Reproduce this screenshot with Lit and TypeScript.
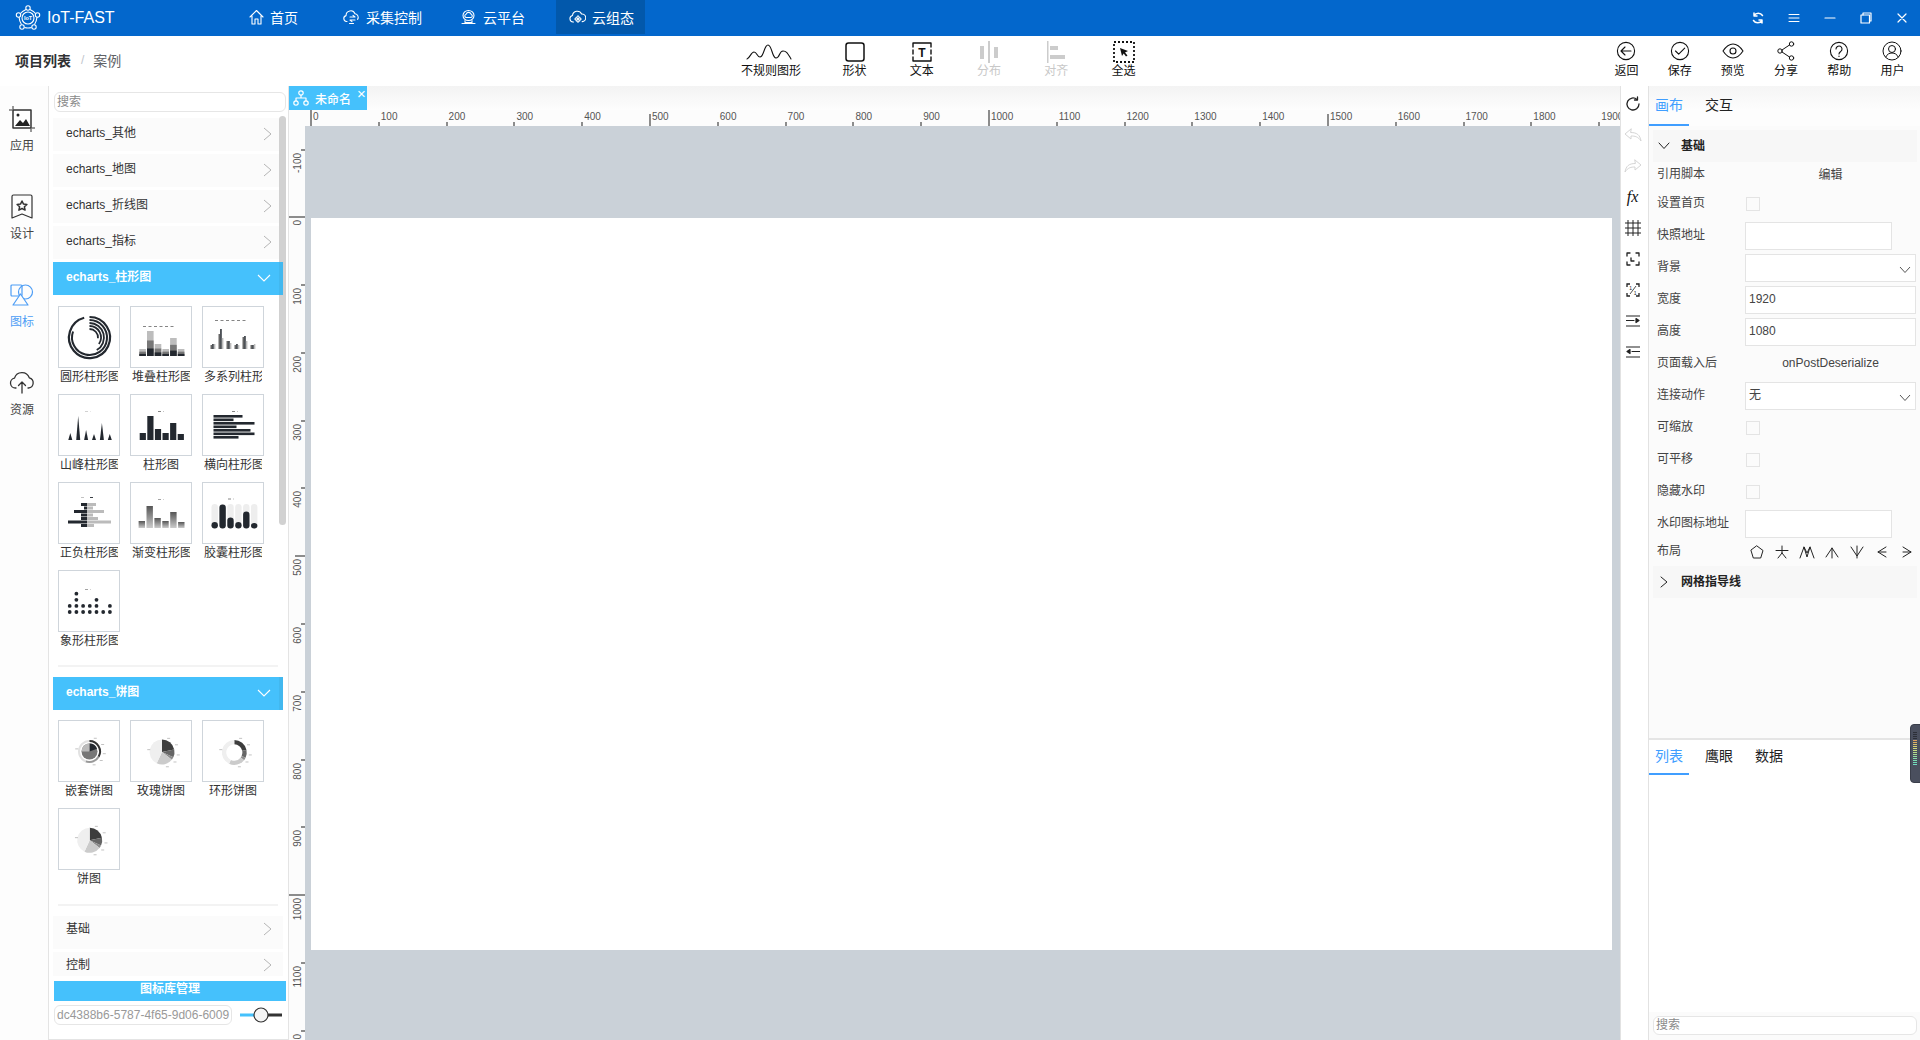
import { LitElement, html, svg, css } from "lit";
import { customElement } from "lit/decorators.js";

const DARK = "#23282f";
const pt = (cx: number, cy: number, r: number, a: number) => {
  const t = ((a - 90) * Math.PI) / 180;
  return [+(cx + r * Math.cos(t)).toFixed(2), +(cy + r * Math.sin(t)).toFixed(2)];
};
const arc = (cx: number, cy: number, r: number, a0: number, a1: number) => {
  const [x0, y0] = pt(cx, cy, r, a0);
  const [x1, y1] = pt(cx, cy, r, a1);
  return `M${x0} ${y0}A${r} ${r} 0 ${a1 - a0 > 180 ? 1 : 0} 1 ${x1} ${y1}`;
};
const wedge = (cx: number, cy: number, r: number, a0: number, a1: number) =>
  `${arc(cx, cy, r, a0, a1)}L${cx} ${cy}Z`;
const legend = (x: number, y: number, w: number, c = "#777") =>
  svg`<line x1=${x} y1=${y + 0.5} x2=${x + w} y2=${y + 0.5} stroke=${c} stroke-width=".9" stroke-dasharray="3 2.5"></line>`;
const slices: [number, number, string][] = [
  [0, 78, "#3d3d3d"],
  [78, 115, "#666"],
  [115, 128, "#8c8c8c"],
  [128, 205, "#cbcbcb"],
  [205, 360, "#efefef"],
];
const pieMarks = (cx: number, cy: number, r: number) =>
  [20, 60, 100, 130, 165, 280].map((a) => {
    const [x, y] = pt(cx, cy, r + 3, a);
    return svg`<rect x=${x} y=${y} width="3" height=".7" fill="#aaa"></rect>`;
  });

const T: Record<string, () => unknown> = {
  radial: () => {
    const rings: [number, number, number][] = [
      [20.5, 345, 2.2], [17.5, 290, 2], [14.5, 150, 1.8], [11.5, 125, 1.8], [8.5, 95, 1.8],
    ];
    return rings.map(
      ([r, a, w]) =>
        svg`<path d=${arc(30.5, 30.5, r, 0, a)} fill="none" stroke=${DARK} stroke-width=${w}></path>`
    );
  },
  stack: () => {
    const h = [7, 25, 12, 7, 18, 7];
    return [
      legend(12, 19, 33),
      ...h.flatMap((v, i) => {
        const x = 8.3 + i * 7.7;
        return [
          svg`<rect x=${x} y=${49 - v} width="6.6" height=${v} fill="#bdbdbd"></rect>`,
          svg`<rect x=${x} y=${49 - v * 0.62} width="6.6" height=${v * 0.62} fill="#777"></rect>`,
          svg`<rect x=${x} y=${49 - v * 0.3} width="6.6" height=${v * 0.3} fill=${DARK}></rect>`,
        ];
      }),
    ];
  },
  multi: () => {
    const a = [4, 15, 8, 4, 12, 4];
    const b = [5, 20, 8, 5, 13, 4];
    const c = [5, 11, 6, 4, 8, 5];
    return [
      legend(12, 13, 33),
      ...a.flatMap((_, i) => {
        const x = 7.5 + i * 8;
        return [
          svg`<rect x=${x} y=${42 - a[i]} width="1.5" height=${a[i]} fill="#666"></rect>`,
          svg`<rect x=${x + 1.7} y=${42 - b[i]} width="1.5" height=${b[i]} fill=${DARK}></rect>`,
          svg`<rect x=${x + 3.4} y=${42 - c[i]} width="1.5" height=${c[i]} fill="#bbb"></rect>`,
        ];
      }),
    ];
  },
  peak: () => {
    const h = [7, 24, 10, 6, 17, 6];
    return [
      legend(26, 16, 6, "#ccc"),
      ...h.map((v, i) => {
        const x = 11.3 + i * 7.9;
        return svg`<path d=${`M${x - 2} 45L${x} ${45 - v}L${x + 2} 45Z`} fill=${DARK}></path>`;
      }),
    ];
  },
  bars: () => {
    const h = [7, 24, 11, 7, 17, 6];
    return [
      legend(27, 16, 6),
      ...h.map((v, i) => svg`<rect x=${8.7 + i * 7.6} y=${45 - v} width="6.2" height=${v} fill=${DARK}></rect>`),
    ];
  },
  hbars: () => {
    const l = [29, 20, 41, 23, 37, 41, 25];
    return [
      legend(29, 16, 6),
      ...l.map((v, i) => svg`<rect x="10.5" y=${20 + i * 3.5} width=${v} height="2.6" fill=${DARK}></rect>`),
    ];
  },
  posneg: () => {
    const a = [6, 3, 13, 6, 6, 19, 6];
    const b = [9, 6, 17, 6, 11, 24, 7];
    return [
      legend(22, 14, 5, "#bbb"),
      legend(31, 14, 5, DARK),
      ...a.flatMap((_, i) => [
        svg`<rect x=${28 - a[i]} y=${20 + i * 3.5} width=${a[i]} height="3" fill=${DARK}></rect>`,
        svg`<rect x="28" y=${20 + i * 3.5} width=${b[i]} height="3" fill="#bbb"></rect>`,
      ]),
    ];
  },
  grad: () => {
    const h = [7, 22, 10, 7, 16, 6];
    return [
      svg`<defs><linearGradient id="tg" x1="0" y1="0" x2="0" y2="1"><stop offset="0" stop-color="#555"></stop><stop offset="1" stop-color="#ccc"></stop></linearGradient></defs>`,
      legend(27, 16, 6, "#999"),
      ...h.map((v, i) => svg`<rect x=${7.6 + i * 7.9} y=${45 - v} width="6.4" height=${v} fill="url(#tg)"></rect>`),
    ];
  },
  capsule: () => {
    const h = [6.4, 24, 11, 6.4, 17, 5.5];
    return [
      legend(25, 15.5, 6),
      ...h.flatMap((v, i) => {
        const x = 8.5 + i * 7.9;
        return [
          svg`<rect x=${x} y="21" width="6.4" height="24.5" rx="3.2" fill="#eeeeee"></rect>`,
          svg`<rect x=${x} y=${45.5 - v} width="6.4" height=${v} rx="3.2" fill=${DARK}></rect>`,
        ];
      }),
    ];
  },
  symbol: () => {
    const n = [2, 4, 2, 2, 3, 1, 2];
    return [
      legend(26, 18, 6, "#999"),
      ...n.flatMap((c, i) =>
        Array.from({ length: c }, (_, j) => svg`<circle cx=${10.7 + i * 6.7} cy=${41 - j * 6.1} r="1.9" fill=${DARK}></circle>`)
      ),
    ];
  },
  nested: () => [
    svg`<circle cx="30.5" cy="30.5" r="10.5" fill="none" stroke="#e2e2e2" stroke-width="2"></circle>`,
    svg`<path d=${arc(30.5, 30.5, 10.5, 0, 120)} fill="none" stroke="#333" stroke-width="2"></path>`,
    svg`<path d=${arc(30.5, 30.5, 10.5, 120, 200)} fill="none" stroke="#999" stroke-width="2"></path>`,
    svg`<circle cx="30.5" cy="30.5" r="8" fill="#777"></circle>`,
    svg`<path d=${wedge(30.5, 30.5, 8, 0, 70)} fill=${DARK}></path>`,
    svg`<path d=${wedge(30.5, 30.5, 8, 270, 360)} fill="#bbb"></path>`,
    ...pieMarks(30, 30, 11),
  ],
  rose: () => [
    ...slices.map(([a, b, c]) => svg`<path d=${wedge(31, 31, 12.5, a, b)} fill=${c}></path>`),
    ...pieMarks(31, 31, 12),
  ],
  ring: () => [
    ...slices.map(
      ([a, b, c]) =>
        svg`<path d=${arc(31.3, 31.5, 10.3, a, b === 360 ? 359.9 : b)} fill="none" stroke=${c} stroke-width="4.3"></path>`
    ),
    ...pieMarks(31, 31, 12),
  ],
  pie: () => [
    ...slices.map(([a, b, c]) => svg`<path d=${wedge(30.7, 31.3, 12.5, a, b)} fill=${c}></path>`),
    ...pieMarks(30.7, 31, 12),
  ],
};

const group1: [string, string][] = [
  ["圆形柱形图", "radial"], ["堆叠柱形图", "stack"], ["多系列柱形图", "multi"],
  ["山峰柱形图", "peak"], ["柱形图", "bars"], ["横向柱形图", "hbars"],
  ["正负柱形图", "posneg"], ["渐变柱形图", "grad"], ["胶囊柱形图", "capsule"],
  ["象形柱形图", "symbol"],
];
const group2: [string, string][] = [
  ["嵌套饼图", "nested"], ["玫瑰饼图", "rose"], ["环形饼图", "ring"], ["饼图", "pie"],
];

const chevR = html`<svg class="chev" width="9" height="14" viewBox="0 0 9 14"><path d="M1 1l7 6-7 6" fill="none" stroke="#b5b5b5" stroke-width="1"></path></svg>`;
const chevD = html`<svg class="chev" width="14" height="9" viewBox="0 0 14 9"><path d="M1 1l6 6 6-6" fill="none" stroke="#fff" stroke-width="1.1"></path></svg>`;
const chevSel = html`<svg class="selchev" width="12" height="8" viewBox="0 0 12 8"><path d="M1 1l5 5.5L11 1" fill="none" stroke="#555" stroke-width="1"></path></svg>`;

const I = (w: number, h: number, body: unknown, sw = 1.3) =>
  html`<svg width=${w} height=${h} viewBox=${`0 0 ${w} ${h}`} fill="none" stroke="currentColor" stroke-width=${sw} stroke-linecap="round" stroke-linejoin="round">${body}</svg>`;

const navIcons = {
  home: I(15, 16, svg`<path d="M1 8L7.5 1.500 14 8M3 7v8h3v-5h3v5h3V7"></path>`, 1.1),
  collect: I(17, 16, svg`<path d="M4 12.500H3.500a3 3 0 0 1-.4-5.900A4.600 4.600 0 0 1 12 4.800a3.600 3.600 0 0 1 2.600 5.600"></path><path d="M7 8h5l-2-1.600M12 11H7l2 1.600M6.500 14.500h4"></path>`, 1.1),
  cloud: I(17, 16, svg`<ellipse cx="8.500" cy="6.500" rx="5.500" ry="5"></ellipse><path d="M6 8.500h5a1.600 1.600 0 0 0 .2-3.100 2.600 2.600 0 0 0-5-.2A1.700 1.700 0 0 0 6 8.500zM5 11.500v2h7v-2M2 14.500h13"></path>`, 1.1),
  scada: I(17, 16, svg`<path d="M4.500 13H4a3.300 3.300 0 0 1-.5-6.500A4.800 4.800 0 0 1 12.600 5a3.800 3.800 0 0 1 .6 7.600"></path><circle cx="9" cy="10" r="2.300"></circle><circle cx="9" cy="10" r=".8"></circle><path d="M9 6.500v1M9 12.500v1M5.600 10h1M11.400 10h1"></path>`, 1.1),
};

const tools = {
  wave: I(50, 18, svg`<path d="M1 16c3-1 4-7 7-7 3 0 3 5 6 5 4 0 4-12 8-12s4 13 8 13 3-7 7-7 5 3 8 8"></path>`, 1.1),
  shape: I(20, 20, svg`<rect x="1" y="1" width="18" height="18" rx="2.500"></rect>`, 1.5),
  text: I(20, 20, svg`<path d="M1 5V1h18v4M1 15v4h18v-4M1 8v4M19 8v4"></path><text x="10" y="15" text-anchor="middle" font-size="12" font-weight="700" fill="currentColor" stroke="none" font-family="Liberation Sans">T</text>`, 1.4),
  dist: html`<svg width="20" height="22" viewBox="0 0 20 22" fill="#ccc"><rect x="1" y="5" width="4" height="13"></rect><rect x="9" y="0" width="2" height="22"></rect><rect x="15" y="6" width="4" height="11"></rect></svg>`,
  align: html`<svg width="20" height="22" viewBox="0 0 20 22" fill="#ccc"><rect x="1" y="0" width="1.500" height="22"></rect><rect x="4" y="5" width="8" height="4"></rect><rect x="4" y="14" width="15" height="4"></rect></svg>`,
  all: html`<svg width="22" height="22" viewBox="0 0 22 22"><rect x="1" y="1" width="20" height="20" fill="none" stroke="#111" stroke-width="1.800" stroke-dasharray="2 2"></rect><path d="M7 7l8 3-3 1.500 2.500 3-1.500 1-2.300-3L9 15z" fill="#111"></path></svg>`,
  back: I(20, 20, svg`<circle cx="10" cy="10" r="8.600"></circle><path d="M15 10H5M9 6l-4 4 4 4"></path>`, 1.1),
  save: I(20, 20, svg`<circle cx="10" cy="10" r="8.600"></circle><path d="M5.500 10l3.200 3.200 6-6"></path>`, 1.1),
  view: I(22, 20, svg`<path d="M1 10c3-4.500 6-7 10-7s7 2.500 10 7c-3 4.500-6 7-10 7S4 14.500 1 10z"></path><circle cx="11" cy="10" r="3"></circle>`, 1.1),
  share: I(20, 20, svg`<circle cx="15.500" cy="3" r="2.200"></circle><circle cx="4" cy="10" r="2.200"></circle><circle cx="15.500" cy="17" r="2.200"></circle><path d="M6 9l7.500-5M6 11l7.500 5"></path>`, 1),
  help: I(20, 20, svg`<circle cx="10" cy="10" r="8.600"></circle><path d="M7 8a3 3 0 1 1 4.800 2.400c-1 .8-1.800 1.200-1.800 2.600M10 15v.4"></path>`, 1.1),
  user: I(20, 20, svg`<circle cx="10" cy="10" r="9"></circle><circle cx="10" cy="8" r="3.500"></circle><path d="M3.800 16c1.200-2.800 3.500-4 6.200-4s5 1.200 6.200 4"></path>`, 1),
};

const railIcons = {
  app: I(26, 26, svg`<path d="M4 0v3M0 4h3M22 23v3M23 22h3" stroke-width="1"></path><rect x="4" y="4" width="18" height="18" fill="#fff" stroke="#333" stroke-width="1.500"></rect><circle cx="9" cy="9" r="1.500" fill="#222" stroke="none"></circle><path d="M6 20l5-6 3 3 3-4 4 7z" fill="#222" stroke="none"></path>`, 1.200),
  design: I(24, 26, svg`<path d="M2 2.500A1.500 1.500 0 0 1 3.500 1h17A1.500 1.500 0 0 1 22 2.500V24l-10-4-10 4z"></path><path d="M12 7l1.500 3.100 3.400.4-2.500 2.300.7 3.300L12 14.500l-3.100 1.600.7-3.300-2.500-2.300 3.400-.4z" stroke-width="1.500"></path>`, 1.200),
  icon: I(24, 22, svg`<rect x="1" y="1" width="11" height="11" rx="1"></rect><circle cx="15.500" cy="8" r="7"></circle><path d="M10.500 10l7.500 11H3z" fill="#fdfdfd"></path>`, 1.200),
  res: I(26, 24, svg`<path d="M7 17H6.500A5 5 0 0 1 5.500 7.100 7.800 7.800 0 0 1 20.300 6.800 5.200 5.200 0 0 1 19.500 17H19"></path><path d="M13 22V11M9.500 14.500L13 11l3.500 3.500"></path>`, 1.300),
};

const stripIcons = [
  I(16, 16, svg`<path d="M14 8a6 6 0 1 1-2-4.500"></path><path d="M12.500 1v3h-3"></path>`, 1.300),
  html`<span class="faint">${I(18, 14, svg`<path d="M7 1L1 6l6 5V8c4 0 7 .5 10 5-1-6-4-8.500-10-8.500z"></path>`, 1)}</span>`,
  html`<span class="faint">${I(18, 14, svg`<path d="M11 1l6 5-6 5V8c-4 0-7 .5-10 5 1-6 4-8.500 10-8.500z"></path>`, 1)}</span>`,
  html`<span class="fx">fx</span>`,
  I(16, 16, svg`<path d="M3 0v16M8 0v16M13 0v16M0 3h16M0 8h16M0 13h16"></path>`, 1),
  I(14, 14, svg`<path d="M1 4V1h3M10 1h3v3M13 10v3h-3M4 13H1v-3M5 6v3h3"></path>`, 1.300),
  html`<svg width="14" height="14" viewBox="0 0 14 14" fill="none" stroke="#222" stroke-width="1.300"><path d="M1 4V1h3M10 1h3v3M13 10v3h-3M4 13H1v-3"></path><path d="M4 11l6-8" stroke-width=".8"></path><text x="3.200" y="7" font-size="5" fill="#222" stroke="none" font-family="Liberation Sans">1</text><text x="7.800" y="11.500" font-size="5" fill="#222" stroke="none" font-family="Liberation Sans">1</text></svg>`,
  I(14, 12, svg`<path d="M0 1h14M0 5.500h8M0 11h14"></path><path d="M10 3.500l3 2-3 2z" fill="#222"></path>`, 1.200),
  I(14, 12, svg`<path d="M0 1h14M6 5.500h8M0 11h14"></path><path d="M4 3.500l-3 2 3 2z" fill="#222"></path>`, 1.200),
];

const layoutIcons = [
  I(14, 14, svg`<path d="M7 1l6 4.500-2.300 7.500H3.300L1 5.500z"></path>`, 1),
  I(14, 14, svg`<path d="M7 1v7M1 5.500h12M7 8l-4 5M7 8l4 5"></path>`, 1),
  I(16, 14, svg`<path d="M1 13L5 2l3 6 3-6 4 11M5 2l3 10 3-10"></path>`, 1),
  I(14, 14, svg`<path d="M1 12l6-9 6 9M7 3v10"></path>`, 1),
  I(14, 14, svg`<path d="M1 2l6 9 6-9M7 1v12"></path>`, 1),
  I(12, 14, svg`<path d="M10 2L2 7l8 5M2 7h8"></path>`, 1),
  I(12, 14, svg`<path d="M2 2l8 5-8 5M2 7h8"></path>`, 1),
];

@customElement("app-root")
export class AppRoot extends LitElement {
  static styles = css`
    :host { display: block; width: 1920px; height: 1040px; overflow: hidden; background: #fff; color: #222;
      font-family: "Liberation Sans", "Noto Sans CJK SC", sans-serif; font-size: 12px; position: relative; }
    * { box-sizing: border-box; }
    svg { display: block; flex: none; }

    .topbar { height: 36px; background: #0367cc; color: #fff; display: flex; }
    .brand { width: 236px; padding-left: 15px; display: flex; align-items: center; gap: 6px; font-size: 16px; height: 36px; }
    .nav { display: grid; grid-template-columns: 94px 117px 109px 89px; height: 34px; font-size: 14px; }
    .navitem { display: flex; align-items: center; gap: 6px; padding-left: 13px; }
    .navitem.on { background: #0258ab; }
    .win { margin-left: auto; display: flex; }
    .win span { width: 36px; height: 36px; display: flex; align-items: center; justify-content: center; }

    .toolbar { height: 50px; display: flex; background: #fff; }
    .crumb { width: 721px; padding: 0 0 2px 15px; display: flex; align-items: center; font-size: 14px; height: 50px; color: #606266; }
    .crumb b { color: #303133; font-weight: 700; }
    .crumb i { font-style: normal; color: #c0c4cc; margin: 0 9px 0 10px; font-size: 12px; }
    .tools { display: flex; }
    .rtools { margin-left: auto; display: flex; padding-right: 1px; }
    .tool { width: 67.25px; display: flex; flex-direction: column; align-items: center; padding-top: 5px; color: #111; }
    .tool.wide { width: 100px; }
    .tool.r { width: 53.2px; }
    .tool.off { color: #c8c8c8; }
    .tool .ic { height: 22px; display: flex; align-items: center; justify-content: center; }
    .tool.r .ic svg { margin-top: -2px; }
    .tool .lb { height: 14px; line-height: 14px; margin-top: 1px; white-space: nowrap; }

    .main { display: flex; height: 954px; }
    .rail { width: 48px; background: #fdfdfd; padding: 20px 4px 0 0; display: flex; flex-direction: column; }
    .railitem { height: 88px; display: flex; flex-direction: column; align-items: center; color: #333; }
    .railitem .ic { height: 26px; display: flex; align-items: center; }
    .railitem .lb { margin-top: 6px; line-height: 16px; color: #444; }
    .railitem.on, .railitem.on .lb { color: #4d9df5; }

    .panel { width: 241px; border-left: 1px solid #e4e4e4; border-right: 1px solid #e4e4e4; border-bottom: 1px solid #e4e4e4; position: relative; background: #fff; }
    .search { height: 20px; border: 1px solid #e6e6e6; border-radius: 6px; background: #fff; color: #8a8a8a; padding-left: 2px; line-height: 18px; font-size: 12px; }
    .panel > .search { margin: 6px 2px 0 5px; }
    .list { height: 858px; margin-top: 6px; overflow: hidden; padding-left: 4px; }
    .row { width: 230px; height: 33px; margin-bottom: 3px; background: #fbfbfb; display: flex; align-items: center; justify-content: space-between; padding: 0 11px 6px 13px; color: #333; }
    .row.cjk { padding-bottom: 11px; }
    .row .chev { margin-top: 5px; }
    .row.cjk .chev { margin-top: 3px; }
    .row.on { background: linear-gradient(90deg, #45c1fc 226px, #42b8ef 226px); color: #fff; font-weight: 700; position: relative; z-index: 2; }
    .row.on .chev { margin-right: 1px; }
    .grid { display: grid; grid-template-columns: repeat(3, 72px); grid-auto-rows: 88px; padding: 8px 0 0 5px; }
    .grid.tight { padding-top: 7px; }
    .cell { display: flex; flex-direction: column; align-items: flex-start; }
    .thumb { width: 62px; height: 62px; border: 1px solid #cfd5db; background: #fff; }
    .cell .name { width: 58px; margin: 0 2px; height: 18px; line-height: 18px; text-align: center; white-space: nowrap; overflow: hidden; color: #333; }
    .rule { width: 220px; height: 2px; background: #f3f3f3; margin: 7px 0 10px 5px; }
    .rule.tight { margin-top: 8px; }
    .scroll { position: absolute; z-index: 1; left: 230px; top: 30px; width: 7px; height: 409px; background: #d1d1d1; border-radius: 4px; }
    .manage { margin: 5px 2px 0 5px; height: 20px; background: #45c1fc; color: #fff; text-align: center; line-height: 17px; font-weight: 700; }
    .bottom { display: flex; align-items: center; margin: 4px 0 0 5px; }
    .idbox { width: 178px; color: #999; overflow: hidden; white-space: nowrap; }
    .slider { width: 42px; height: 16px; margin-left: 8px; }

    .center { width: 1331px; display: flex; flex-direction: column; }
    .tabs { height: 24px; background: linear-gradient(#f3f3f3, #fdfdfd); display: flex; }
    .doc { width: 78px; height: 24px; background: #45c1fc; color: #fff; display: flex; align-items: center; gap: 6px; padding-left: 4px; font-weight: 500; }
    .doc .x { font-weight: 400; font-size: 15px; line-height: 12px; margin: -8px 0 0 0; }
    .hruler { height: 16px; background: #fcfcfc; display: flex; overflow: hidden; padding-left: 22px; }
    .hc { flex: 0 0 67.8px; position: relative; color: #555; font-size: 10px; line-height: 10px; padding: 2px 0 0 2px; }
    .hc::before { content: ""; position: absolute; left: -1px; bottom: 0; width: 2px; height: 4px; background: #8c8c8c; }
    .hc.mid::before { height: 12px; }
    .hc.major::before { height: 16px; }
    .work { flex: 1; display: flex; min-height: 0; }
    .vruler { width: 16px; background: #fcfcfc; overflow: hidden; padding-top: 23.5px; }
    .vc { height: 67.8px; position: relative; color: #555; font-size: 10px; line-height: 10px; display: flex; justify-content: center; padding: 3px 0 0 1px; }
    .vc span { writing-mode: vertical-rl; transform: rotate(180deg); height: fit-content; }
    .vc::before { content: ""; position: absolute; right: 0; top: -1px; height: 2px; width: 4px; background: #8c8c8c; }
    .vc.mid::before { width: 10px; }
    .vc.major::before { width: 16px; }
    .canvas { flex: 1; background: #cad1d8; padding: 92px 0 0 6px; overflow: hidden; }
    .page { width: 1301px; height: 732px; background: #fff; }

    .strip { width: 28px; background: #fff; border-left: 1px solid #e2e2e2; display: flex; flex-direction: column; align-items: center; padding: 2px 4px 0 0; }
    .strip div { height: 31px; display: flex; align-items: center; justify-content: center; color: #222; flex: none; }
    .faint { color: #d5d5d5; }
    .fx { font-family: "Liberation Serif", serif; font-style: italic; font-weight: 400; font-size: 16px; color: #111; }

    .right { width: 272px; border-left: 1px solid #e2e2e2; display: flex; flex-direction: column; background: #fff; }
    .top { height: 654px; background: #fbfbfb; border-bottom: 2px solid #e5e5e5; }
    .rtabs { display: flex; font-size: 14px; color: #222; height: 40px; background: linear-gradient(#f5f5f5, #fdfdfd 60%); }
    .rtabs.plain { background: #fff; height: 35px; }
    .rtabs span { width: 50px; text-align: center; line-height: 39px; padding-right: 10px; }
    .rtabs.plain span { line-height: 32px; }
    .rtabs span.on { width: 40px; padding-right: 0; margin-right: 10px; color: #409eff; border-bottom: 2px solid #409eff; }
    .sec { margin: 4px 3px 0 4px; height: 32px; background: #f7f7f7; display: flex; align-items: center; font-weight: 700; padding-left: 5px; color: #222; }
    .sec svg { margin-right: 11px; }
    .sec span { padding-bottom: 4px; }
    .form { padding-left: 8px; }
    .fr { display: flex; height: 28px; margin-bottom: 4px; align-items: center; color: #444; }
    .fr.first { height: 26px; margin-bottom: 2px; }
    .fr.lay { height: 20px; }
    .fr label { width: 88px; flex: none; padding-bottom: 5px; white-space: nowrap; }
    .val { width: 171px; text-align: center; padding-bottom: 3px; }
    .inp { height: 28px; border: 1px solid #e4e4e4; background: #fff; padding-left: 3px; line-height: 25px; color: #444; position: relative; }
    .inp.s { width: 147px; }
    .inp.l { width: 171px; }
    .selchev { position: absolute; right: 4px; top: 11px; }
    .cb { width: 14px; height: 14px; border: 1px solid #e4e4e4; margin-left: 1px; }
    .lays { display: flex; flex: none; width: 175px; color: #222; margin-left: -1px; }
    .lays span { width: 25px; flex: none; display: flex; justify-content: center; }
    .bot { flex: 1; }
    .bsearch { height: 28px; background: #fbfbfb; padding: 4px 3px 0 4px; }
    .bsearch .search { height: 19px; line-height: 16px; }
    .gadget { position: absolute; left: 1910px; top: 724px; width: 12px; height: 59px; background: #4a4f5e; border-radius: 4px 0 0 4px; border: 1px solid #3a3e4a; display: flex; flex-direction: column; gap: 1px; padding: 7px 2px; }
    .gadget i { display: block; height: 1px; width: 4px; }
  `;

  private thumbs(list: [string, string][], tight = false) {
    return html`<div class="grid ${tight ? "tight" : ""}">
      ${list.map(
        ([n, k]) => html`<div class="cell">
          <div class="thumb"><svg width="60" height="60" viewBox="0 0 60 60">${T[k]()}</svg></div>
          <div class="name">${n}</div>
        </div>`
      )}
    </div>`;
  }

  render() {
    const hr = Array.from({ length: 20 }, (_, i) => i * 100);
    const vr = Array.from({ length: 14 }, (_, i) => (i - 1) * 100);
    const cls = (v: number) => (v === 0 || v === 1000 ? "major" : v % 500 === 0 ? "mid" : "");
    const gadgetColors = ["#2c2f38","#2c2f38","#2c2f38","#2c2f38","#e0a060","#e0b060","#d8c070","#d8d070","#d0d878","#c8dc80","#b8dc88","#a8dc90","#98dca0","#88dca8","#78dcb0","#70dcb8","#70dcc0"];
    return html`
      <div class="topbar">
        <div class="brand">
          <svg width="26" height="26" viewBox="0 0 26 26" fill="none" stroke="#fff" stroke-width="1.100">
            <path d="M11 4.500C8 6 6.500 7 5.500 8.500M15 4.500c3 1.500 4.500 2.500 5.500 4M4 12c.3 3 1 5.500 2.500 7.500M22 12c-.3 3-1 5.500-2.500 7.500M9.500 22.500c2.500 .7 4.500 .7 7 0"></path>
            <circle cx="13" cy="13" r="6"></circle>
            <circle cx="13" cy="3" r="2.200"></circle><circle cx="3.500" cy="10" r="2.200"></circle><circle cx="22.500" cy="10" r="2.200"></circle><circle cx="7" cy="22" r="2.200"></circle><circle cx="19" cy="22" r="2.200"></circle>
            <text x="13" y="15" text-anchor="middle" font-size="5.500" font-weight="700" fill="#fff" stroke="none" font-family="Liberation Sans">IoT</text>
          </svg>
          <span>IoT-FAST</span>
        </div>
        <div class="nav">
          <div class="navitem">${navIcons.home}<span>首页</span></div>
          <div class="navitem">${navIcons.collect}<span>采集控制</span></div>
          <div class="navitem">${navIcons.cloud}<span>云平台</span></div>
          <div class="navitem on">${navIcons.scada}<span>云组态</span></div>
        </div>
        <div class="win">
          <span>${I(12, 12, svg`<path d="M10.500 3.500A5 5 0 0 0 2 3.500M1.500 8.500A5 5 0 0 0 10 8.500M2 1v3h3M10 11V8H7"></path>`, 1.500)}</span>
          <span>${I(12, 10, svg`<path d="M1 1.500h10M1 5h10M1 8.500h10"></path>`, 1)}</span>
          <span>${I(12, 10, svg`<path d="M1 5h10"></path>`, 1.200)}</span>
          <span>${I(12, 12, svg`<rect x="1" y="3" width="8.500" height="8"></rect><path d="M3 3V1h8v8H9.500"></path>`, 1.200)}</span>
          <span>${I(12, 12, svg`<path d="M2 2l8 8M10 2l-8 8"></path>`, 1.200)}</span>
        </div>
      </div>

      <div class="toolbar">
        <div class="crumb"><b>项目列表</b><i>/</i><span>案例</span></div>
        <div class="tools">
          <div class="tool wide"><div class="ic">${tools.wave}</div><div class="lb">不规则图形</div></div>
          <div class="tool"><div class="ic">${tools.shape}</div><div class="lb">形状</div></div>
          <div class="tool"><div class="ic">${tools.text}</div><div class="lb">文本</div></div>
          <div class="tool off"><div class="ic">${tools.dist}</div><div class="lb">分布</div></div>
          <div class="tool off"><div class="ic">${tools.align}</div><div class="lb">对齐</div></div>
          <div class="tool"><div class="ic">${tools.all}</div><div class="lb">全选</div></div>
        </div>
        <div class="rtools">
          ${([["back","返回"],["save","保存"],["view","预览"],["share","分享"],["help","帮助"],["user","用户"]] as const).map(
            ([k, l]) => html`<div class="tool r"><div class="ic">${tools[k]}</div><div class="lb">${l}</div></div>`
          )}
        </div>
      </div>

      <div class="main">
        <div class="rail">
          <div class="railitem"><div class="ic">${railIcons.app}</div><div class="lb">应用</div></div>
          <div class="railitem"><div class="ic">${railIcons.design}</div><div class="lb">设计</div></div>
          <div class="railitem on"><div class="ic">${railIcons.icon}</div><div class="lb">图标</div></div>
          <div class="railitem"><div class="ic">${railIcons.res}</div><div class="lb">资源</div></div>
        </div>

        <div class="panel">
          <div class="search">搜索</div>
          <div class="list">
            ${["echarts_其他", "echarts_地图", "echarts_折线图", "echarts_指标"].map(
              (t) => html`<div class="row"><span>${t}</span>${chevR}</div>`
            )}
            <div class="row on"><span>echarts_柱形图</span>${chevD}</div>
            ${this.thumbs(group1)}
            <div class="rule"></div>
            <div class="row on"><span>echarts_饼图</span>${chevD}</div>
            ${this.thumbs(group2, true)}
            <div class="rule tight"></div>
            <div class="row cjk"><span>基础</span>${chevR}</div>
            <div class="row cjk"><span>控制</span>${chevR}</div>
          </div>
          <div class="scroll"></div>
          <div class="manage">图标库管理</div>
          <div class="bottom">
            <div class="search idbox">dc4388b6-5787-4f65-9d06-6009</div>
            <svg class="slider" width="42" height="16" viewBox="0 0 42 16">
              <rect x="0" y="6.500" width="14" height="3" fill="#45c1fc"></rect>
              <rect x="26" y="6.500" width="16" height="3" fill="#333"></rect>
              <circle cx="21" cy="8" r="7" fill="#f5f5f5" stroke="#333" stroke-width="1.200"></circle>
            </svg>
          </div>
        </div>

        <div class="center">
          <div class="tabs">
            <div class="doc">
              ${I(16, 16, svg`<circle cx="8" cy="3" r="2.200"></circle><circle cx="3" cy="13" r="2.200"></circle><circle cx="13" cy="13" r="2.200"></circle><path d="M8 5.200V8M3 10.800V8h10v2.800"></path>`, 1.200)}
              <span>未命名</span><span class="x">×</span>
            </div>
          </div>
          <div class="hruler">
            ${hr.map((v) => html`<div class="hc ${cls(v)}">${v}</div>`)}
          </div>
          <div class="work">
            <div class="vruler">
              ${vr.map((v) => html`<div class="vc ${cls(v)}"><span>${v}</span></div>`)}
            </div>
            <div class="canvas"><div class="page"></div></div>
          </div>
        </div>

        <div class="strip">
          ${stripIcons.map((ic) => html`<div>${ic}</div>`)}
        </div>

        <div class="right">
          <div class="top">
            <div class="rtabs"><span class="on">画布</span><span>交互</span></div>
            <div class="sec">
              ${I(12, 8, svg`<path d="M1 1l5 5.500L11 1"></path>`, 1)}
              <span>基础</span>
            </div>
            <div class="form">
              <div class="fr first"><label>引用脚本</label><div class="val">编辑</div></div>
              <div class="fr"><label>设置首页</label><div class="cb"></div></div>
              <div class="fr"><label>快照地址</label><div class="inp s"></div></div>
              <div class="fr"><label>背景</label><div class="inp l">${chevSel}</div></div>
              <div class="fr"><label>宽度</label><div class="inp l">1920</div></div>
              <div class="fr"><label>高度</label><div class="inp l">1080</div></div>
              <div class="fr"><label>页面载入后</label><div class="val">onPostDeserialize</div></div>
              <div class="fr"><label>连接动作</label><div class="inp l">无${chevSel}</div></div>
              <div class="fr"><label>可缩放</label><div class="cb"></div></div>
              <div class="fr"><label>可平移</label><div class="cb"></div></div>
              <div class="fr"><label>隐藏水印</label><div class="cb"></div></div>
              <div class="fr"><label>水印图标地址</label><div class="inp s"></div></div>
              <div class="fr lay"><label>布局</label><div class="lays">${layoutIcons.map((i) => html`<span>${i}</span>`)}</div></div>
            </div>
            <div class="sec">
              ${I(12, 12, svg`<path d="M3 1l6 5-6 5"></path>`, 1)}
              <span>网格指导线</span>
            </div>
          </div>
          <div class="rtabs plain"><span class="on">列表</span><span>鹰眼</span><span>数据</span></div>
          <div class="bot"></div>
          <div class="bsearch"><div class="search">搜索</div></div>
        </div>
      </div>

      <div class="gadget">${gadgetColors.map((c) => html`<i style="background:${c}"></i>`)}</div>
    `;
  }
}
